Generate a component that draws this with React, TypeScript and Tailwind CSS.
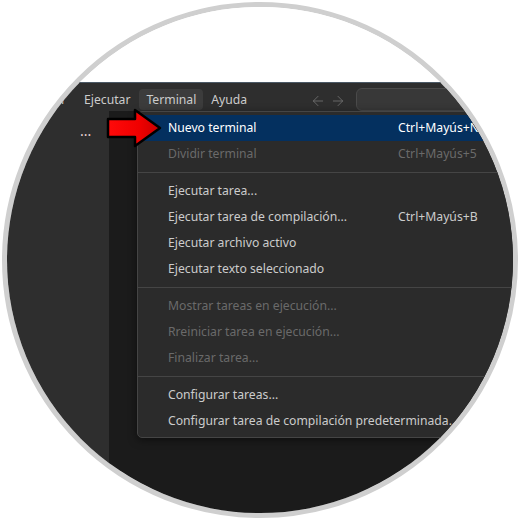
import { ArrowLeft, ArrowRight } from 'lucide-react';

type Item = { label: string; shortcut?: string; disabled?: boolean; active?: boolean };

const groups: Item[][] = [
  [
    { label: 'Nuevo terminal', shortcut: 'Ctrl+Mayús+Ñ', active: true },
    { label: 'Dividir terminal', shortcut: 'Ctrl+Mayús+5', disabled: true },
  ],
  [
    { label: 'Ejecutar tarea...' },
    { label: 'Ejecutar tarea de compilación...', shortcut: 'Ctrl+Mayús+B' },
    { label: 'Ejecutar archivo activo' },
    { label: 'Ejecutar texto seleccionado' },
  ],
  [
    { label: 'Mostrar tareas en ejecución...', disabled: true },
    { label: 'Rreiniciar tarea en ejecución...', disabled: true },
    { label: 'Finalizar tarea...', disabled: true },
  ],
  [
    { label: 'Configurar tareas...' },
    { label: 'Configurar tarea de compilación predeterminada...' },
  ],
];

function MenuRow({ item }: { item: Item }) {
  return (
    <div
      className={`flex items-center h-[26px] pl-[30px] whitespace-nowrap ${
        item.active ? 'bg-[#04305f] text-white' : item.disabled ? 'text-[#6a6a6a]' : 'text-[#cccccc]'
      }`}
    >
      <span className="w-[230px] shrink-0">{item.label}</span>
      {item.shortcut && <span>{item.shortcut}</span>}
    </div>
  );
}

function RedArrow() {
  return (
    <svg className="absolute left-[100px] top-[103px]" width="64" height="50" viewBox="0 0 64 50">
      <defs>
        <linearGradient id="red" x1="0" y1="0" x2="1" y2="0">
          <stop offset="0" stopColor="#ff0a0a" />
          <stop offset="0.6" stopColor="#f00000" />
          <stop offset="1" stopColor="#c80000" />
        </linearGradient>
      </defs>
      <polygon
        points="8,16 35,16 35,7 60,25 35,43 35,34 8,34"
        fill="url(#red)"
        stroke="#000"
        strokeWidth="2.5"
        strokeLinejoin="round"
      />
    </svg>
  );
}

export default function App() {
  return (
    <div className="relative w-[520px] h-[520px] bg-white font-['Noto_Sans',sans-serif] text-[12.2px]">
      <div className="absolute left-[2px] top-[2px] w-[516px] h-[516px] rounded-full border-[5px] border-[#cfcfcf] overflow-hidden bg-white">
        <div className="flex flex-col h-full">
          <div className="h-[75px] shrink-0 bg-white" />

          {/* title bar */}
          <div className="flex items-end pb-[1px] h-[29px] shrink-0 bg-[#2e2e2e] border-t border-[#4b5966] text-[#cccccc] pl-[33px]">
            <div className="w-[270px] shrink-0 flex items-center">
              <div className="px-[7px] h-[21px] pt-[2px] flex items-center rounded">Ver</div>
              <div className="ml-[4px] px-[7px] h-[21px] pt-[2px] flex items-center rounded">Ejecutar</div>
              <div className="ml-[2px] px-[7px] h-[21px] pt-[2px] flex items-center rounded bg-[#3c3c3c]">Terminal</div>
              <div className="ml-[1px] px-[7px] h-[21px] pt-[2px] flex items-center rounded">Ayuda</div>
            </div>
            <div className="h-[21px] pt-[2px] flex items-center gap-[4px] text-[#6f6f6f]">
              <ArrowLeft size={16} strokeWidth={1.3} />
              <ArrowRight size={16} strokeWidth={1.3} />
            </div>
            <div className="ml-[10px] mb-[-1px] h-[23px] w-[200px] rounded-[6px] border border-[#4a4a4a] bg-[#383838]" />
          </div>

          {/* body */}
          <div className="flex flex-1 min-h-0">
            <div className="w-[102px] shrink-0 bg-[#2e2e2e] pl-[73px] pt-[13px] text-[14px] text-[#e6d2d2] leading-none">...</div>
            <div className="flex-1 bg-[#1b1b1b] pl-[28px]">
              <div className="w-[420px] bg-[#2b2b2b] border border-[#454545] rounded-[5px] py-[3px] shadow-[0_2px_8px_rgba(0,0,0,0.5)]">
                {groups.map((g, gi) => (
                  <div key={gi}>
                    {gi > 0 && <div className="my-[5px] h-px bg-[#454545]" />}
                    {g.map(item => (
                      <MenuRow key={item.label} item={item} />
                    ))}
                  </div>
                ))}
              </div>
            </div>
          </div>
        </div>
      </div>
      <RedArrow />
    </div>
  );
}
